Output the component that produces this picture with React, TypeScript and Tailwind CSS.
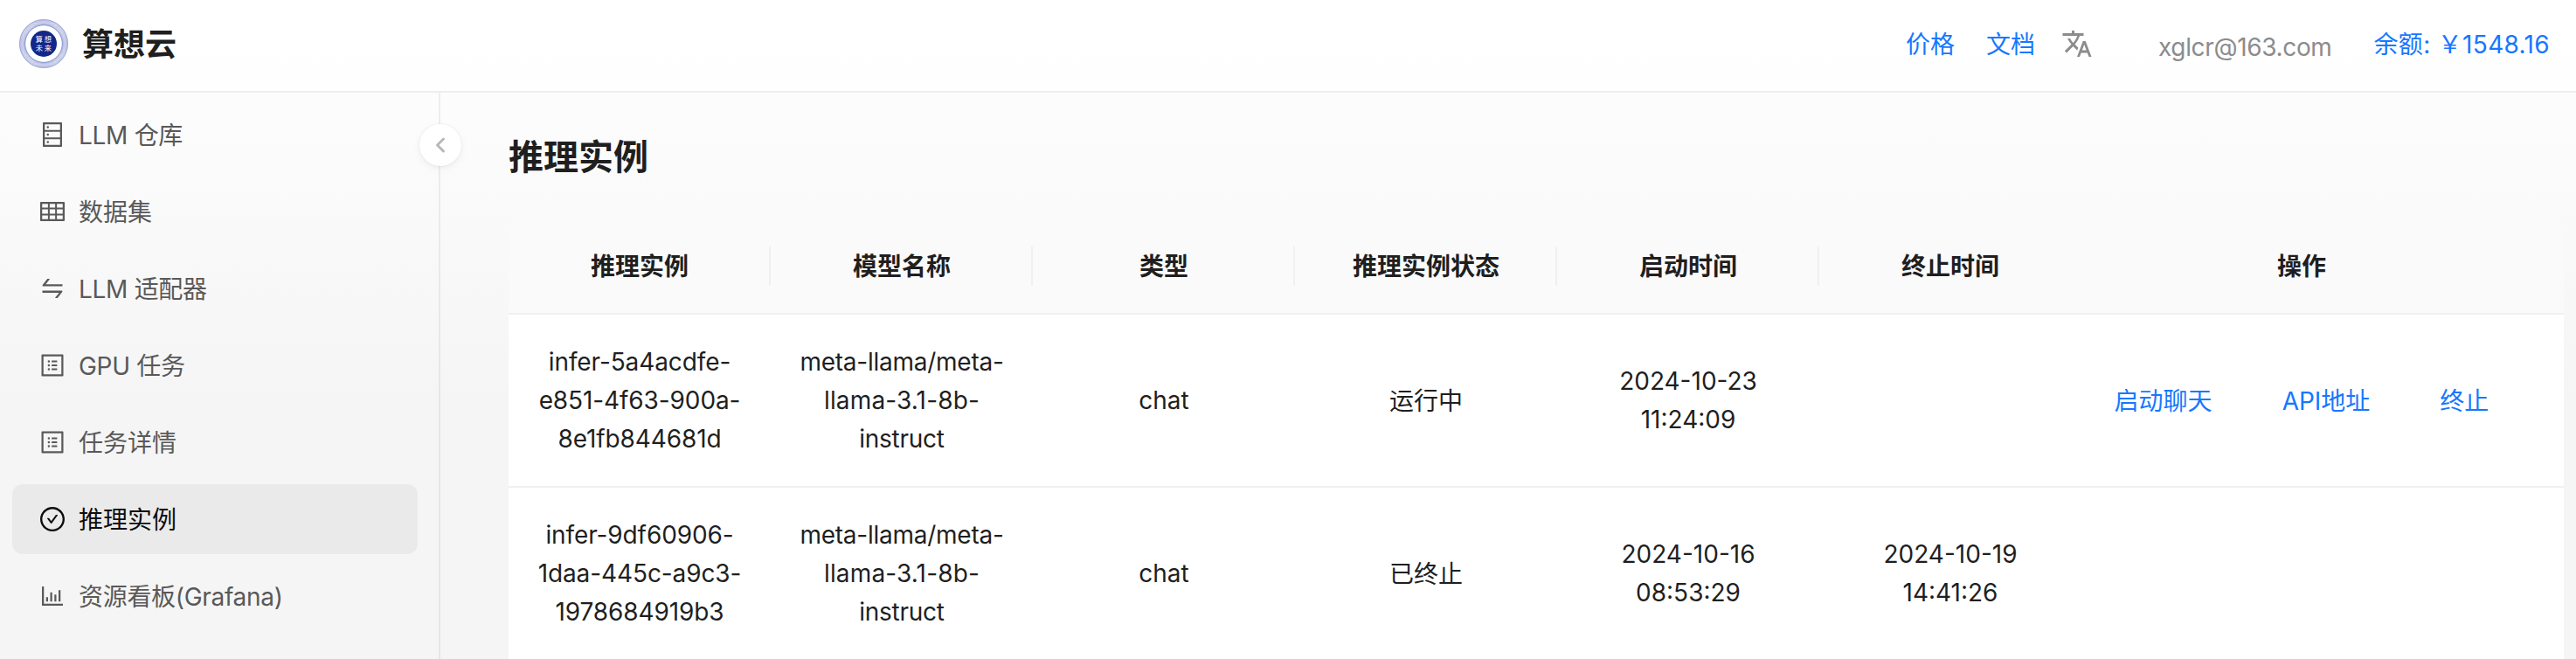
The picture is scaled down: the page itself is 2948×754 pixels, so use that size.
import type { ReactNode } from "react";
import type { IconType } from "react-icons";
import {
  AiOutlineBarChart,
  AiOutlineCheckCircle,
  AiOutlineDatabase,
  AiOutlineProfile,
  AiOutlineSwap,
  AiOutlineTable,
} from "react-icons/ai";
import { MdTranslate } from "react-icons/md";

const menu: { label: string; icon: IconType; active?: boolean }[] = [
  { label: "LLM 仓库", icon: AiOutlineDatabase },
  { label: "数据集", icon: AiOutlineTable },
  { label: "LLM 适配器", icon: AiOutlineSwap },
  { label: "GPU 任务", icon: AiOutlineProfile },
  { label: "任务详情", icon: AiOutlineProfile },
  { label: "推理实例", icon: AiOutlineCheckCircle, active: true },
  { label: "资源看板(Grafana)", icon: AiOutlineBarChart },
];

const columns = ["推理实例", "模型名称", "类型", "推理实例状态", "启动时间", "终止时间", "操作"];

interface Instance {
  id: string[];
  model: string[];
  type: string;
  status: string;
  start: string[];
  end: string[];
  actions: string[];
}

const instances: Instance[] = [
  {
    id: ["infer-5a4acdfe-", "e851-4f63-900a-", "8e1fb844681d"],
    model: ["meta-llama/meta-", "llama-3.1-8b-", "instruct"],
    type: "chat",
    status: "运行中",
    start: ["2024-10-23", "11:24:09"],
    end: [],
    actions: ["启动聊天", "API地址", "终止"],
  },
  {
    id: ["infer-9df60906-", "1daa-445c-a9c3-", "1978684919b3"],
    model: ["meta-llama/meta-", "llama-3.1-8b-", "instruct"],
    type: "chat",
    status: "已终止",
    start: ["2024-10-16", "08:53:29"],
    end: ["2024-10-19", "14:41:26"],
    actions: [],
  },
];

const GRID = "grid grid-cols-[300px_300px_300px_300px_300px_252px_600px]";

function Logo() {
  return (
    <svg viewBox="0 0 56 56" className="size-14 shrink-0">
      <circle cx="28" cy="28" r="28" fill="#fff" />
      {Array.from({ length: 16 }, (_, i) => (
        <ellipse
          key={i}
          cx="28"
          cy="28"
          rx="27.7"
          ry="21"
          fill="none"
          stroke="#3a4fb0"
          strokeOpacity="0.55"
          strokeWidth="0.35"
          transform={`rotate(${i * 11.25} 28 28)`}
        />
      ))}
      <circle cx="28" cy="28" r="27.5" fill="none" stroke="#8f9bd3" strokeOpacity="0.5" strokeWidth="0.6" />
      <circle cx="28" cy="28" r="20.8" fill="#fff" fillOpacity="0.7" />
      <circle cx="28" cy="28" r="15" fill="#13278a" />
      <g fill="#fff" fontSize="8.2" fontFamily="'Noto Sans CJK SC', sans-serif" textAnchor="middle">
        <text x="22.8" y="26.2">算</text>
        <text x="32.8" y="26.2">想</text>
        <text x="22.8" y="35.8">未</text>
        <text x="32.8" y="35.8">来</text>
      </g>
    </svg>
  );
}

function Header() {
  return (
    <header className="flex h-[106px] shrink-0 items-start border-b-2 border-[#eeeeee] bg-white/60 pl-[22px] pr-[30px]">
      <div className="flex h-[100px] items-center gap-4">
        <Logo />
        <h1 className="pt-px text-[36px] font-bold leading-none text-[#1f1f1f]">算想云</h1>
      </div>
      <div className="ml-auto flex h-[100px] items-center text-[#1677ff]">
        <a className="mr-9 pt-0.5">价格</a>
        <a className="mr-[30px] pt-0.5">文档</a>
        <MdTranslate className="mr-[75px] size-9 text-[#8c8c8c]" />
        <span className="mr-12 pt-2 tracking-[-0.35px] text-[#8c8c8c]">xglcr@163.com</span>
        <a className="pt-0.5 tracking-[0.33px]">余额: ￥1548.16</a>
      </div>
    </header>
  );
}

function Sidebar() {
  return (
    <aside className="relative w-[504px] shrink-0 border-r-2 border-[#0505050f] pl-[14px] pt-2">
      <nav className="flex flex-col gap-2">
        {menu.map(({ label, icon: Icon, active }) => (
          <a
            key={label}
            className={`flex h-20 w-[464px] items-center gap-[14px] rounded-xl pl-[30px] ${
              active ? "bg-[#eaeaea] text-[#0d0d0d]" : "text-[#595959]"
            }`}
          >
            <Icon className="size-8" />
            <span className={`pt-0.5 ${/[A-Z]/.test(label) ? "tracking-[-0.3px]" : ""}`}>{label}</span>
          </a>
        ))}
      </nav>
      <button className="absolute -right-[26px] top-9 flex size-12 items-center justify-center rounded-full bg-white text-[#b8b8b8] shadow-[0_4px_16px_-4px_rgba(0,0,0,0.05),0_2px_8px_-2px_rgba(25,15,15,0.07),0_0_2px_0_rgba(0,0,0,0.08)]">
        <svg viewBox="0 0 24 24" className="size-6" fill="none" stroke="currentColor" strokeWidth="3" strokeLinecap="round" strokeLinejoin="round">
          <path d="M15.5 5 8.5 12l7 7" />
        </svg>
      </button>
    </aside>
  );
}

function Lines({ lines, className = "" }: { lines: string[]; className?: string }) {
  return (
    <div className={`flex flex-col items-center ${className}`}>
      {lines.map((line) => (
        <span key={line} className={`whitespace-nowrap ${line.includes(".") ? "tracking-[0.15px]" : ""}`}>
          {line}
        </span>
      ))}
    </div>
  );
}

function Row({ children }: { children: ReactNode }) {
  return (
    <div className={`${GRID} h-[198px] items-center border-b-2 border-[#f0f0f0] bg-white text-center`}>{children}</div>
  );
}

function InstanceTable() {
  return (
    <section className="mt-10 w-[2352px] overflow-hidden rounded-t-2xl text-[#1f1f1f]">
      <div className={`${GRID} h-[110px] items-center border-b-2 border-[#f0f0f0] bg-[#fafafa] font-bold`}>
        {columns.map((name, i) => (
          <div
            key={name}
            className={`flex h-[45px] items-center justify-center pt-0.5 ${
              i < 5 ? "border-r-2 border-[#f0f0f0] pl-0.5" : ""
            } ${i === 5 ? "pl-12" : ""}`}
          >
            {name}
          </div>
        ))}
      </div>
      {instances.map((row) => (
        <Row key={row.id[0]}>
          <Lines lines={row.id} className="tracking-[-0.1px]" />
          <Lines lines={row.model} className="tracking-[-0.25px]" />
          <span>{row.type}</span>
          <span className="pt-0.5">{row.status}</span>
          <Lines lines={row.start} />
          <Lines lines={row.end} className="pl-12" />
          <div className="flex justify-center gap-20 pt-0.5 text-[#1677ff]">
            {row.actions.map((action) => (
              <a key={action}>{action}</a>
            ))}
          </div>
        </Row>
      ))}
    </section>
  );
}

export default function App() {
  return (
    <div className="flex h-[754px] w-[2948px] flex-col overflow-hidden bg-[linear-gradient(#ffffff,#f5f5f5_460px)] font-[Inter,'Noto_Sans_CJK_SC',sans-serif] text-[28px] leading-[44px]">
      <Header />
      <div className="flex min-h-0 flex-1">
        <Sidebar />
        <main className="flex flex-col pl-[78px] pt-11">
          <h2 className="h-[60px] text-[40px] font-bold leading-[60px] text-[#1f1f1f]">推理实例</h2>
          <InstanceTable />
        </main>
      </div>
    </div>
  );
}
